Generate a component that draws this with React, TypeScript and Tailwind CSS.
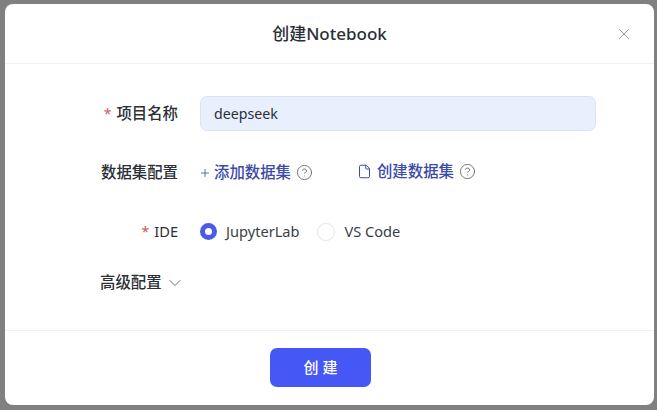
import React from "react";
import { ChevronDown, CircleHelp, File, Plus, X } from "lucide-react";

const font = "font-['Noto_Sans','Noto_Sans_CJK_SC',sans-serif]";

function Label({ children, required }: { children: React.ReactNode; required?: boolean }) {
  return (
    <div className="flex w-[173px] shrink-0 items-center justify-end text-[15.4px] font-medium text-[#2b2f36]">
      {required && <span className="mr-[5px] text-[14px] font-normal text-[#b9655f]">*</span>}
      {children}
    </div>
  );
}

export default function App() {
  return (
    <div className={`h-[410px] w-[657px] overflow-hidden bg-[#808080] pl-[5px] pt-[4px] ${font}`}>
      <div className="flex h-[401px] w-[649px] flex-col rounded-[8px] bg-white">
        {/* Cabecera */}
        <div className="relative flex h-[60px] shrink-0 items-center justify-center border-b border-[#eff0f2]">
          <h1 className="text-[17px] font-medium leading-none text-[#2b2f36]">创建Notebook</h1>
          <button type="button" aria-label="关闭" className="absolute right-[21px] top-[21px] text-[#8a8f99]">
            <X className="size-[18px]" strokeWidth={1.2} />
          </button>
        </div>

        {/* Formulario */}
        <div className="flex flex-1 flex-col pt-[32px]">
          <div className="flex h-[35px] items-center">
            <Label required>项目名称</Label>
            <input
              readOnly
              value="deepseek"
              className="ml-[22px] h-[35px] w-[396px] rounded-[7px] border border-[#dbe3f0] bg-[#e9f0fd] px-[13px] text-[14.2px] text-[#2b2f36] outline-none"
            />
          </div>

          <div className="mt-[30px] flex h-[24px] items-center">
            <Label>数据集配置</Label>
            <div className="ml-[21px] flex items-center text-[15.4px] font-medium text-[#3c4aa8]">
              <Plus className="mr-[3px] size-[12px]" strokeWidth={1.6} />
              添加数据集
              <CircleHelp className="ml-[5px] size-[17px] text-[#5c6068]" strokeWidth={1.2} />
            </div>
            <div className="ml-[44px] flex -translate-y-[1px] items-center text-[15.4px] font-medium text-[#3c4aa8]">
              <File className="mr-[5px] size-[15px]" strokeWidth={1.6} />
              创建数据集
              <CircleHelp className="ml-[5px] size-[17px] text-[#5c6068]" strokeWidth={1.2} />
            </div>
          </div>

          <div className="mt-[35px] flex h-[24px] items-center">
            <div className="flex w-[173px] shrink-0 items-center justify-end text-[14.6px] text-[#2b2f36]">
              <span className="mr-[5px] text-[14px] text-[#b9655f]">*</span>
              IDE
            </div>
            <div className="ml-[22px] flex items-center text-[14.6px] text-[#3a3e46]">
              <span className="size-[17px] rounded-full border-[5px] border-[#4a5be8] bg-white" />
              <span className="ml-[9px]">JupyterLab</span>
              <span className="ml-[18px] size-[18px] rounded-full border border-[#e4e5e8] bg-white" />
              <span className="ml-[9px]">VS Code</span>
            </div>
          </div>

          <div className="mt-[27px] flex h-[24px] items-center pl-[95px] text-[15.4px] font-medium text-[#2b2f36]">
            高级配置
            <ChevronDown className="ml-[3px] size-[20px] text-[#5c6068]" strokeWidth={1.1} />
          </div>
        </div>

        {/* Pie */}
        <div className="flex h-[75px] shrink-0 items-center border-t border-[#eff0f2] pb-[2px] pl-[265px]">
          <button
            type="button"
            className="h-[39px] w-[101px] rounded-[7px] bg-[#4558f5] pl-[4px] text-[15px] font-medium tracking-[4px] text-white"
          >
            创建
          </button>
        </div>
      </div>
    </div>
  );
}
